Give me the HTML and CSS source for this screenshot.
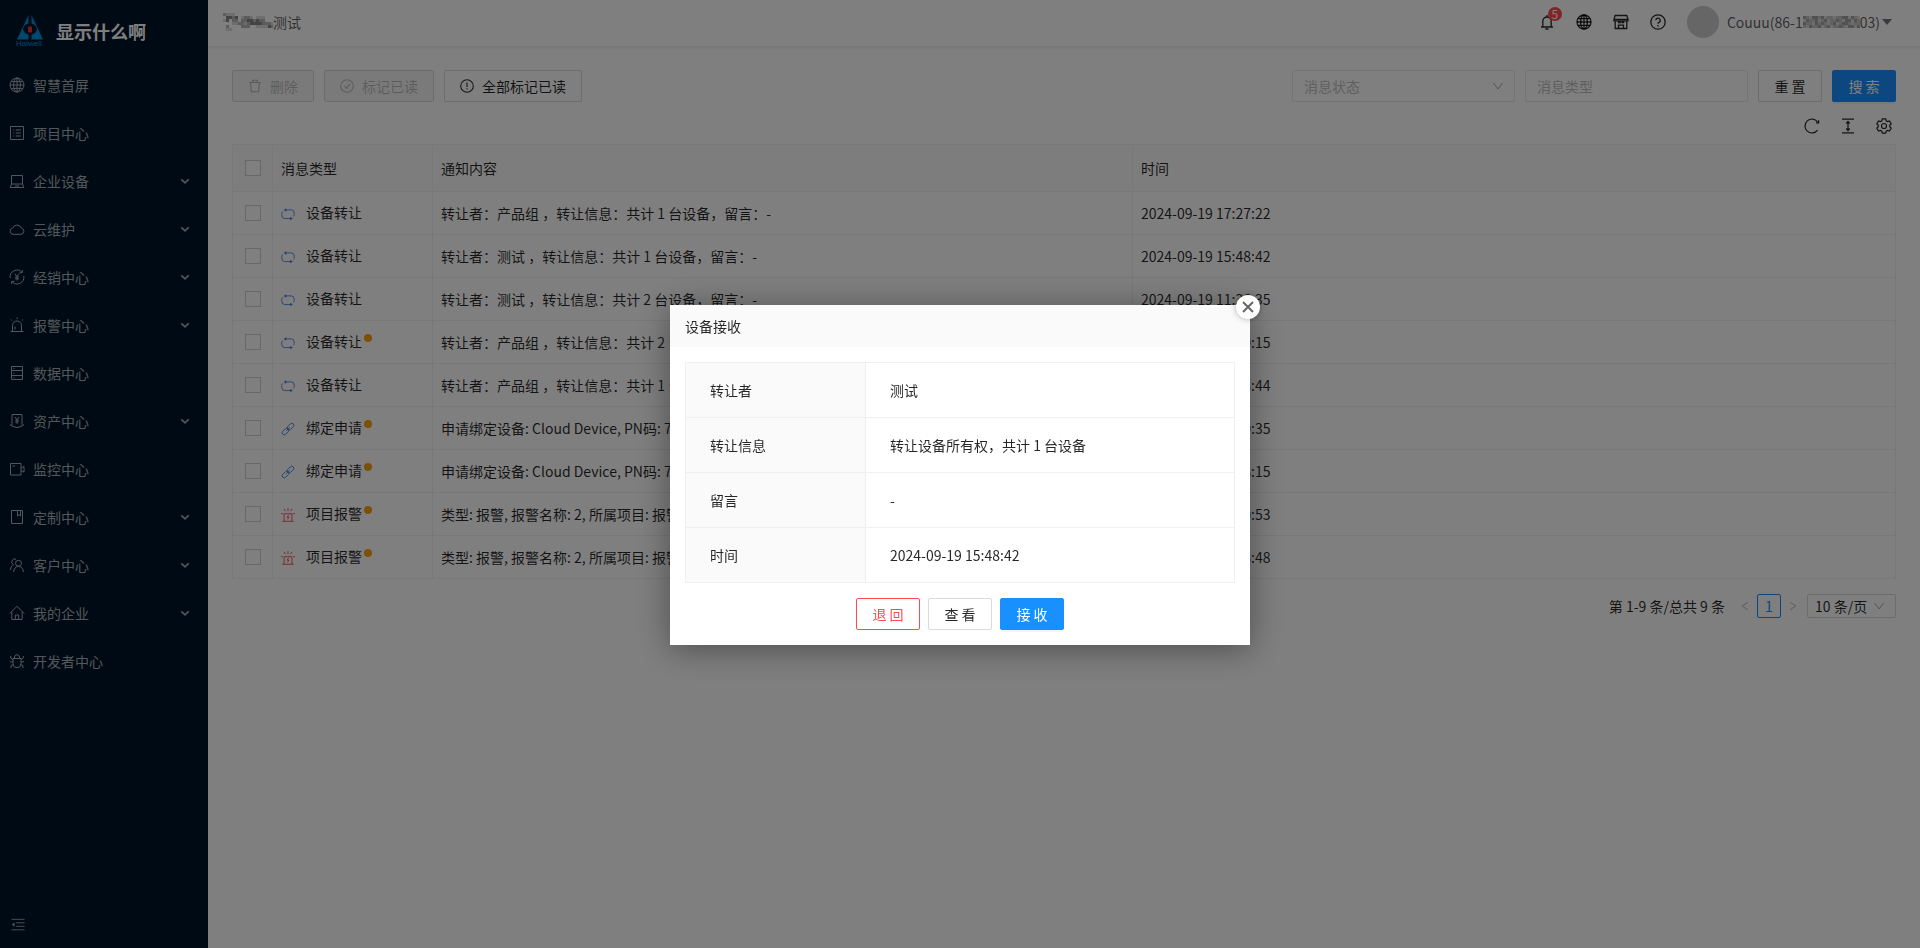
FILE: index.html
```html
<!DOCTYPE html>
<html lang="zh-CN">
<head>
<meta charset="utf-8">
<title>消息中心</title>
<link rel="stylesheet" href="styles.css">
</head>
<body>
<svg class="sprite" aria-hidden="true">
  <symbol id="i-globe" viewBox="0 0 16 16"><circle cx="8" cy="8" r="7"/><ellipse cx="8" cy="8" rx="3.4" ry="7"/><path d="M8 1v14M1 8h14M2.2 4.6h11.6M2.2 11.4h11.6"/></symbol>
  <symbol id="i-list" viewBox="0 0 16 16"><path d="M1.5 1.5h13v13h-13zM4.3 5h1M4.3 8h1M4.3 11h1M6.8 5h5M6.8 8h5M6.8 11h5"/></symbol>
  <symbol id="i-laptop" viewBox="0 0 16 16"><path d="M2.5 11V2.500h11V11M2.500 11h11l1.300 3.500H1.200zM6 13h4"/></symbol>
  <symbol id="i-cloud" viewBox="0 0 16 16"><path d="M4 13.300a3.100 3.100 0 0 1-.5-6.100 4.800 4.800 0 0 1 9 0 3.100 3.100 0 0 1-.5 6.100z"/></symbol>
  <symbol id="i-trade" viewBox="0 0 16 16"><path d="M1.200 9A6.800 6.800 0 0 1 13 3.400M14.800 7A6.800 6.800 0 0 1 3 12.600M13.300 1v2.700h-2.700M2.700 15v-2.700h2.700M5.800 4.700L8 7.500l2.200-2.800M8 7.500v4M6 8h4M6 9.800h4"/></symbol>
  <symbol id="i-alarm" viewBox="0 0 16 16"><path d="M3.500 12V8.500a4.500 4.500 0 0 1 9 0V12M1.500 14.500h13M3.500 12v2.500M12.500 12v2.500M8 .5v1.600M2 2.500l1.200 1.200M14 2.500l-1.200 1.200M6 12.500V9.500"/></symbol>
  <symbol id="i-data" viewBox="0 0 16 16"><path d="M2.500 1.500h11v13h-11zM2.500 5.500h11M2.500 10.500h11M4.600 3.500h1M4.600 8h1M4.600 12.500h1"/></symbol>
  <symbol id="i-asset" viewBox="0 0 16 16"><path d="M3 12V1.500h10V12M1 11.500l2 1.500 5 1.700 5-1.700 2-1.500M6 4l2 2.800L10 4M8 6.800v4M6.200 7.200h3.600M6.200 9h3.600"/></symbol>
  <symbol id="i-video" viewBox="0 0 16 16"><path d="M1.500 2.500h10.500v11.500H1.500zM12 7l3-1.500v5.600L12 9.600M3.500 5h2.500"/></symbol>
  <symbol id="i-book" viewBox="0 0 16 16"><path d="M2.500 1.500h11v13h-11zM8.500 1.500v5.500l1.500-1.400L11.500 7V1.500"/></symbol>
  <symbol id="i-users" viewBox="0 0 16 16"><circle cx="9.500" cy="6.300" r="3"/><path d="M4.700 15c0-3 2-5.700 4.800-5.700s4.900 2.700 4.900 5.700M7 2.300a2.900 2.900 0 1 0-2.700 5.200M1.500 13c.1-2.600 1.200-4.600 3.400-5.400"/></symbol>
  <symbol id="i-home" viewBox="0 0 16 16"><path d="M.8 8.500L8 1.300l7.200 7.200M2.800 7v7.500h10.400V7M6.300 14.500V10h3.400v4.500"/></symbol>
  <symbol id="i-bug" viewBox="0 0 16 16"><path d="M4 5.500h8v5.200a4 4 0 0 1-8 0zM5.200 5.500a2.800 3.800 0 0 1 5.600 0M4 8.800H1M12 8.800h3M4 6.500L1.700 5V3M12 6.500L14.300 5V3M4.200 11.500L2 12.600V15M11.800 11.500l2.200 1.100V15M7 14.500h2"/></symbol>
  <symbol id="i-fold" viewBox="0 0 16 16"><path d="M.5 1.500h15M6 5.500h9.500M6 9.500h9.500M.5 13.500h15"/><path class="solid" d="M4 5v5L1 7.500z"/></symbol>
  <symbol id="i-down" viewBox="0 0 12 12"><path d="M1.500 3L6 9l4.500-6"/></symbol>
  <symbol id="i-angle" viewBox="0 0 12 12"><path d="M1.500 4L6 8.200 10.500 4"/></symbol>
  <symbol id="i-left" viewBox="0 0 12 12"><path d="M9.500 1.500L2.500 6l7 4.500"/></symbol>
  <symbol id="i-right" viewBox="0 0 12 12"><path d="M2.500 1.500L9.500 6l-7 4.500"/></symbol>
  <symbol id="i-bell" viewBox="0 0 16 16"><path d="M3.800 13V7.200a4.200 4.200 0 0 1 8.400 0V13M2 13h12M8 1v2M6.500 15h3"/></symbol>
  <symbol id="i-shop" viewBox="0 0 16 16"><path d="M2.200 1.500h11.600L15 5.300v1.500H1V5.300zM1 5.300h14M2.200 7.500v7h11.600v-7M5.500 14.500v-3.300h5v3.300M5.600 7v1.500h1.600V7M9 7v1.500h1.600V7"/></symbol>
  <symbol id="i-help" viewBox="0 0 16 16"><circle cx="8" cy="8" r="7.200"/><path d="M5.800 6.300a2.200 2.200 0 1 1 3.200 2c-.7.300-1 .7-1 1.500M8 11v1.400"/></symbol>
  <symbol id="i-trash" viewBox="0 0 16 16"><path d="M1.500 4h13M3 4l.8 10.500h8.400L13 4M5.300 4V1.500h5.400V4"/></symbol>
  <symbol id="i-check" viewBox="0 0 16 16"><circle cx="8" cy="8" r="7.200"/><path d="M5 8l2.300 2.700L11.300 5.500"/></symbol>
  <symbol id="i-warn" viewBox="0 0 16 16"><circle cx="8" cy="8" r="7.200"/><path d="M8 4v5M8 10.600v1.500"/></symbol>
  <symbol id="i-reload" viewBox="0 0 16 16"><path d="M13.600 12.200A7 7 0 1 1 13.600 3.800M14.600 2.200v2.600h-2.600"/></symbol>
  <symbol id="i-height" viewBox="0 0 16 16"><path d="M2 1.200h12M2 14.800h12M8 4v8M6.300 5.500L8 3.500l1.700 2M6.300 10.500L8 12.500l1.700-2"/></symbol>
  <symbol id="i-gear" viewBox="0 0 16 16"><circle cx="8" cy="8" r="2.500"/><path d="M6.300.9h3.400l.5 2 1.300.7 2-.6 1.700 2.900-1.500 1.400v1.400l1.500 1.400-1.700 2.900-2-.6-1.300.7-.5 2H6.300l-.5-2-1.300-.7-2 .6L.8 10.100l1.500-1.400V7.300L.8 5.900 2.500 3l2 .6 1.300-.7z"/></symbol>
  <symbol id="i-swap" viewBox="0 0 16 16"><path d="M5 3.300h6.500a3.600 3.600 0 0 1 3.600 3.600v1.500a3.600 3.600 0 0 1-.8 2.400M11 13.200H4.500A3.600 3.600 0 0 1 .9 9.600V7.500a3.600 3.600 0 0 1 1-2.500"/><path class="solid" d="M6 1.300v4L3 3.300zM10.500 11.200v4l3-2z"/></symbol>
  <symbol id="i-link" viewBox="0 0 16 16"><rect x="6.300" y="3" width="9" height="4.600" rx="2.300" transform="rotate(-45 10.800 5.300)"/><rect x=".7" y="8.500" width="9" height="4.600" rx="2.300" transform="rotate(-45 5.200 10.800)"/><path d="M6 10l4-4"/></symbol>
  <symbol id="i-siren" viewBox="0 0 16 16"><path d="M3.500 15V6.500h9V15M1.500 15.200h13M8 0v3.500M3.500 1l1.500 2.500M12.500 1l-1.500 2.500M0 6.500h2M14 6.500h2M8.800 7.800L7 10.500h2L7.500 13"/></symbol>
  <symbol id="i-close" viewBox="0 0 12 12"><path d="M1 1l10 10M11 1L1 11"/></symbol>
</svg>

<div class="app">
  <aside class="sider">
    <div class="brand">
      <svg class="brand-logo" viewBox="0 0 28 32" role="img" aria-label="Haiwell">
        <path fill="#0090d8" d="M12.500 0v8.500a7 7 0 0 0-5.500 6 7 7 0 0 0 5.500 5V24.500H1zM15.500 0v8.500a7 7 0 0 1 5.500 6 7 7 0 0 1-5.500 5V24.500H27z"/>
        <path fill="#e03038" d="M12 11.500h4v6h-4z"/>
        <text class="brand-mark" x="0" y="31">Haiwell</text>
      </svg>
      <h1 class="brand-name">显示什么啊</h1>
    </div>
    <nav class="menu">
      <a href="#"><svg class="icon"><use href="#i-globe"/></svg><span>智慧首屏</span></a>
      <a href="#"><svg class="icon"><use href="#i-list"/></svg><span>项目中心</span></a>
      <a href="#"><svg class="icon"><use href="#i-laptop"/></svg><span>企业设备</span><svg class="icon arrow"><use href="#i-angle"/></svg></a>
      <a href="#"><svg class="icon"><use href="#i-cloud"/></svg><span>云维护</span><svg class="icon arrow"><use href="#i-angle"/></svg></a>
      <a href="#"><svg class="icon"><use href="#i-trade"/></svg><span>经销中心</span><svg class="icon arrow"><use href="#i-angle"/></svg></a>
      <a href="#"><svg class="icon"><use href="#i-alarm"/></svg><span>报警中心</span><svg class="icon arrow"><use href="#i-angle"/></svg></a>
      <a href="#"><svg class="icon"><use href="#i-data"/></svg><span>数据中心</span></a>
      <a href="#"><svg class="icon"><use href="#i-asset"/></svg><span>资产中心</span><svg class="icon arrow"><use href="#i-angle"/></svg></a>
      <a href="#"><svg class="icon"><use href="#i-video"/></svg><span>监控中心</span></a>
      <a href="#"><svg class="icon"><use href="#i-book"/></svg><span>定制中心</span><svg class="icon arrow"><use href="#i-angle"/></svg></a>
      <a href="#"><svg class="icon"><use href="#i-users"/></svg><span>客户中心</span><svg class="icon arrow"><use href="#i-angle"/></svg></a>
      <a href="#"><svg class="icon"><use href="#i-home"/></svg><span>我的企业</span><svg class="icon arrow"><use href="#i-angle"/></svg></a>
      <a href="#"><svg class="icon"><use href="#i-bug"/></svg><span>开发者中心</span></a>
    </nav>
    <button class="fold" type="button" aria-label="收起菜单"><svg class="icon"><use href="#i-fold"/></svg></button>
  </aside>

  <div class="page">
    <header class="topbar">
      <div class="org">
        <svg class="mosaic org-mosaic" viewBox="0 0 50 18" aria-hidden="true">
          <path stroke="#dcdcdc" d="M3 1.500h9M18 4.500h12M0 7.500h6M15 10.500h15M33 13.500h12M3 16.500h6M33 4.500h9M9 10.500h6M48 10.500h2"/>
          <path stroke="#b8b8b8" d="M0 1.500h3M6 4.500h9M21 4.500h6M9 7.500h6M18 7.500h6M30 7.500h12M15 10.500h6M24 10.500h12M39 10.500h9M18 13.500h9M3 13.500h3M45 13.500h5"/>
          <path stroke="#888" d="M3 4.500h6M12 4.500h3M24 7.500h6M30 10.500h9M33 7.500h3M3 7.500h3M27 10.500h3M45 13.500h3"/>
        </svg>
        <span>测试</span>
      </div>
      <div class="tools">
        <button class="tool" type="button" aria-label="消息"><svg class="icon"><use href="#i-bell"/></svg><span class="count">5</span></button>
        <button class="tool" type="button" aria-label="语言"><svg class="icon"><use href="#i-globe"/></svg></button>
        <button class="tool" type="button" aria-label="商城"><svg class="icon"><use href="#i-shop"/></svg></button>
        <button class="tool" type="button" aria-label="帮助"><svg class="icon"><use href="#i-help"/></svg></button>
        <button class="user" type="button">
          <span class="avatar"></span>
          <span class="user-name">Couuu(86-1<svg class="mosaic name-mosaic" viewBox="0 0 57 12" aria-hidden="true">
            <path stroke="#c4c4c4" d="M0 1.500h57M0 4.500h57M0 7.500h57M0 10.500h57"/>
            <path stroke="#a4a4a4" stroke-dasharray="3 6 6 3 3 9" d="M0 1.500h57M3 4.500h54M0 7.500h57M6 10.500h51"/>
            <path stroke="#dcdcdc" stroke-dasharray="3 12 3 6" d="M6 1.500h51M0 4.500h57M9 7.500h48M3 10.500h54"/>
          </svg>03)</span>
          <span class="caret"></span>
        </button>
      </div>
    </header>

    <main class="content">
      <form class="filters">
        <button class="btn" type="button" disabled><svg class="icon"><use href="#i-trash"/></svg>删除</button>
        <button class="btn" type="button" disabled><svg class="icon"><use href="#i-check"/></svg>标记已读</button>
        <button class="btn" type="button"><svg class="icon"><use href="#i-warn"/></svg>全部标记已读</button>
        <span class="select field first-field">
          <select aria-label="消息状态"><option>消息状态</option></select>
          <svg class="icon"><use href="#i-down"/></svg>
        </span>
        <input class="field" type="text" placeholder="消息类型" aria-label="消息类型">
        <button class="btn short" type="reset">重 置</button>
        <button class="btn short primary" type="button">搜 索</button>
      </form>

      <div class="table-tools">
        <button type="button" aria-label="刷新"><svg class="icon"><use href="#i-reload"/></svg></button>
        <button type="button" aria-label="密度"><svg class="icon"><use href="#i-height"/></svg></button>
        <button type="button" aria-label="列设置"><svg class="icon"><use href="#i-gear"/></svg></button>
      </div>

      <table class="messages">
        <colgroup><col class="c-check"><col class="c-type"><col class="c-text"><col></colgroup>
        <thead>
          <tr><th><input type="checkbox" aria-label="全选"></th><th>消息类型</th><th>通知内容</th><th>时间</th></tr>
        </thead>
        <tbody>
          <tr><td><input type="checkbox" aria-label="选择"></td><td><span class="kind"><svg class="icon blue"><use href="#i-swap"/></svg>设备转让</span></td><td>转让者：产品组 ，转让信息：共计 1 台设备，留言：-</td><td>2024-09-19 17:27:22</td></tr>
          <tr><td><input type="checkbox" aria-label="选择"></td><td><span class="kind"><svg class="icon blue"><use href="#i-swap"/></svg>设备转让</span></td><td>转让者：测试 ，转让信息：共计 1 台设备，留言：-</td><td>2024-09-19 15:48:42</td></tr>
          <tr><td><input type="checkbox" aria-label="选择"></td><td><span class="kind"><svg class="icon blue"><use href="#i-swap"/></svg>设备转让</span></td><td>转让者：测试 ，转让信息：共计 2 台设备，留言：-</td><td>2024-09-19 11:36:35</td></tr>
          <tr><td><input type="checkbox" aria-label="选择"></td><td><span class="kind unread"><svg class="icon blue"><use href="#i-swap"/></svg>设备转让</span></td><td>转让者：产品组 ，转让信息：共计 2 台设备，留言：-</td><td>2024-09-19 11:30:15</td></tr>
          <tr><td><input type="checkbox" aria-label="选择"></td><td><span class="kind"><svg class="icon blue"><use href="#i-swap"/></svg>设备转让</span></td><td>转让者：产品组 ，转让信息：共计 1 台设备，留言：-</td><td>2024-09-19 11:28:44</td></tr>
          <tr><td><input type="checkbox" aria-label="选择"></td><td><span class="kind unread"><svg class="icon blue"><use href="#i-link"/></svg>绑定申请</span></td><td>申请绑定设备: Cloud Device, PN码: 70</td><td>2024-09-19 10:20:35</td></tr>
          <tr><td><input type="checkbox" aria-label="选择"></td><td><span class="kind unread"><svg class="icon blue"><use href="#i-link"/></svg>绑定申请</span></td><td>申请绑定设备: Cloud Device, PN码: 70</td><td>2024-09-19 10:18:15</td></tr>
          <tr><td><input type="checkbox" aria-label="选择"></td><td><span class="kind unread"><svg class="icon red"><use href="#i-siren"/></svg>项目报警</span></td><td>类型: 报警, 报警名称: 2, 所属项目: 报警</td><td>2024-09-19 09:40:53</td></tr>
          <tr><td><input type="checkbox" aria-label="选择"></td><td><span class="kind unread"><svg class="icon red"><use href="#i-siren"/></svg>项目报警</span></td><td>类型: 报警, 报警名称: 2, 所属项目: 报警</td><td>2024-09-19 09:38:48</td></tr>
        </tbody>
      </table>

      <div class="pager">
        <span>第 1-9 条/总共 9 条</span>
        <div class="pages">
          <button class="step" type="button" aria-label="上一页" disabled><svg class="icon"><use href="#i-left"/></svg></button>
          <button class="current" type="button">1</button>
          <button class="step" type="button" aria-label="下一页" disabled><svg class="icon"><use href="#i-right"/></svg></button>
        </div>
        <span class="select page-size">
          <select aria-label="每页条数"><option>10 条/页</option></select>
          <svg class="icon"><use href="#i-down"/></svg>
        </span>
      </div>
    </main>
  </div>
</div>

<div class="mask">
  <section class="modal" role="dialog" aria-modal="true" aria-labelledby="modal-title">
    <button class="close" type="button" aria-label="关闭"><svg class="icon"><use href="#i-close"/></svg></button>
    <h2 class="modal-title" id="modal-title">设备接收</h2>
    <div class="modal-body">
      <table class="details">
        <tr><th scope="row">转让者</th><td>测试</td></tr>
        <tr><th scope="row">转让信息</th><td>转让设备所有权，共计 1 台设备</td></tr>
        <tr><th scope="row">留言</th><td>-</td></tr>
        <tr><th scope="row">时间</th><td>2024-09-19 15:48:42</td></tr>
      </table>
      <div class="actions">
        <button class="btn short danger" type="button">退 回</button>
        <button class="btn short" type="button">查 看</button>
        <button class="btn short primary" type="button">接 收</button>
      </div>
    </div>
  </section>
</div>
</body>
</html>
```
FILE: styles.css
```css
* { box-sizing: border-box; }

body {
  margin: 0;
  font-family: "Noto Sans CJK SC", "Noto Sans", sans-serif;
  font-size: 14px;
  line-height: 22px;
  color: rgba(0, 0, 0, .85);
  background: #fff;
}

button, input, select { font: inherit; color: inherit; margin: 0; }
button { border: 0; padding: 0; background: none; }

.sprite { display: none; }

.icon {
  width: 14px;
  height: 14px;
  flex: none;
  display: block;
  fill: none;
  stroke: currentColor;
  stroke-width: 1;
  overflow: visible;
}
.solid { fill: currentColor; stroke: none; }

.app { display: flex; min-height: 100vh; }

/* Sidebar */
.sider {
  width: 208px;
  flex: none;
  display: flex;
  flex-direction: column;
  background: #001529;
  color: #a6adb4;
}
.brand {
  display: flex;
  align-items: center;
  gap: 12px;
  height: 61px;
  padding-left: 16px;
}
.brand-logo { width: 28px; height: 32px; overflow: visible; }
.brand-mark { font: 8px "Liberation Sans", sans-serif; fill: #0090d8; }
.brand-name { margin: 0; font-size: 18px; font-weight: 700; color: #fff; }
.menu { display: flex; flex-direction: column; gap: 8px; padding-top: 4px; flex: 1; }
.menu a {
  display: flex;
  align-items: center;
  gap: 8px;
  height: 40px;
  padding: 0 18px 0 9px;
  color: inherit;
  text-decoration: none;
}
.menu .icon { width: 16px; height: 16px; }
.menu .arrow { width: 10px; height: 10px; margin-left: auto; stroke-width: 2; }
.fold { height: 44px; padding: 0 0 3px 10px; text-align: left; }
.fold .icon { width: 16px; height: 14px; }

/* Header */
.page { flex: 1; min-width: 0; }
.topbar {
  display: flex;
  justify-content: space-between;
  align-items: center;
  height: 46px;
  padding: 0 28px 2px 15px;
  color: rgba(0, 0, 0, .65);
  box-shadow: 0 1px 4px rgba(0, 21, 41, .12);
}
.org { display: flex; align-items: center; }
.mosaic { fill: none; stroke-width: 3; }
.org-mosaic { width: 50px; height: 18px; }
.tools { display: flex; align-items: center; gap: 21px; color: rgba(0, 0, 0, .85); }
.tool { position: relative; }
.tool .icon { width: 16px; height: 16px; stroke-width: 1.3; }
.count {
  position: absolute;
  top: -7px;
  left: 9px;
  width: 14px;
  height: 14px;
  border-radius: 7px;
  background: #ff4d4f;
  color: #fff;
  font-size: 12px;
  line-height: 14px;
  text-align: center;
}
.user { display: flex; align-items: center; color: rgba(0, 0, 0, .65); }
.avatar { width: 32px; height: 32px; margin-right: 8px; border-radius: 50%; background: #ccc; }
.user-name { display: flex; align-items: center; }
.name-mosaic { width: 57px; height: 12px; }
.caret { margin-left: 2px; border: 5px solid transparent; border-top: 6px solid #777; border-bottom: 0; }

/* Controls */
.btn {
  display: flex;
  align-items: center;
  justify-content: center;
  gap: 8px;
  height: 32px;
  padding: 0 15px;
  border: 1px solid #d9d9d9;
  border-radius: 2px;
  background: #fff;
}
.btn .icon { stroke-width: 1.2; }
.btn:disabled { background: #f5f5f5; color: rgba(0, 0, 0, .25); }
.btn.short { width: 64px; padding: 0; }
.btn.primary { background: #1890ff; border-color: #1890ff; color: #fff; box-shadow: 0 2px 0 rgba(0, 0, 0, .04); }
.btn.danger { border-color: #ff4d4f; color: #ff4d4f; }

.content { padding: 24px 24px 0; }
.filters { display: flex; gap: 10px; }
.field {
  width: 223px;
  height: 32px;
  padding: 0 11px;
  border: 1px solid #e8e8e8;
  border-radius: 2px;
  background: #fff;
}
.first-field { margin-left: auto; }
.field::placeholder { color: #bfbfbf; opacity: 1; }
.select { position: relative; display: flex; color: #bfbfbf; }
.select select { width: 100%; border: 0; padding: 0; appearance: none; background: none; outline: 0; }
.select .icon {
  position: absolute;
  right: 10px;
  top: 50%;
  width: 12px;
  height: 12px;
  margin-top: -6px;
  color: #aaa;
  pointer-events: none;
}

.table-tools { display: flex; justify-content: flex-end; gap: 20px; padding: 16px 4px 10px; }
.table-tools .icon { width: 16px; height: 16px; stroke-width: 1.2; }

/* Message list */
table { border-spacing: 0; width: 100%; }
.messages { table-layout: fixed; border: 1px solid #f0f0f0; border-width: 1px 0 0 1px; }
.c-check { width: 40px; }
.c-type { width: 160px; }
.c-text { width: 700px; }
.messages th, .messages td {
  height: 43px;
  padding: 0 8px;
  border: 1px solid #f0f0f0;
  border-width: 0 1px 1px 0;
  text-align: left;
  font-weight: 400;
  white-space: nowrap;
}
.messages th { height: 47px; background: #fafafa; }
.messages th:first-child, .messages td:first-child { text-align: center; padding: 0; }
.messages input {
  display: block;
  width: 16px;
  height: 16px;
  margin: 0 auto;
  appearance: none;
  border: 1px solid #d0d0d0;
  background: #fff;
}
.kind { position: relative; display: inline-flex; align-items: center; gap: 11px; }
.kind.unread::after {
  content: "";
  position: absolute;
  top: 4px;
  right: -10px;
  width: 8px;
  height: 8px;
  border-radius: 50%;
  background: #faa010;
}
.kind .icon { margin-top: 4px; }
.blue { color: #4a7de0; }
.red { color: #f04450; }

/* Pagination */
.pager { display: flex; justify-content: flex-end; align-items: center; margin-top: 15px; }
.pages { display: flex; margin: 0 2px 0 8px; }
.pages button { width: 24px; height: 24px; display: flex; align-items: center; justify-content: center; }
.step { color: #aaa; }
.step .icon { width: 10px; height: 12px; }
.pages .current { border: 1px solid #1890ff; border-radius: 2px; color: #1890ff; }
.page-size { width: 89px; height: 24px; padding-left: 7px; border: 1px solid #d9d9d9; border-radius: 2px; color: rgba(0, 0, 0, .85); }

/* Dialog */
.mask {
  position: fixed;
  inset: 0;
  display: flex;
  align-items: center;
  justify-content: center;
  padding-top: 2px;
  background: rgba(0, 0, 0, .5);
}
.modal {
  position: relative;
  width: 580px;
  background: #fff;
  box-shadow: 0 4px 32px rgba(0, 0, 0, .4);
}
.modal-title {
  margin: 0;
  padding: 10px 15px;
  font-size: 14px;
  font-weight: 400;
  background: #fafafa;
}
.modal-body { padding: 15px; }
.close {
  position: absolute;
  top: -10px;
  right: -10px;
  display: flex;
  align-items: center;
  justify-content: center;
  width: 24px;
  height: 24px;
  border-radius: 50%;
  background: #fff;
  color: #666;
  box-shadow: 0 0 6px rgba(0, 0, 0, .3);
}
.close .icon { width: 12px; height: 12px; stroke-width: 2; }
.details { border: 1px solid #f0f0f0; border-width: 1px 0 0 1px; }
.details th, .details td {
  height: 55px;
  padding: 0 24px;
  border: 1px solid #f0f0f0;
  border-width: 0 1px 1px 0;
  font-weight: 400;
  text-align: left;
}
.details th { width: 180px; background: #fafafa; }
.actions { display: flex; justify-content: center; gap: 8px; margin-top: 15px; }
```
